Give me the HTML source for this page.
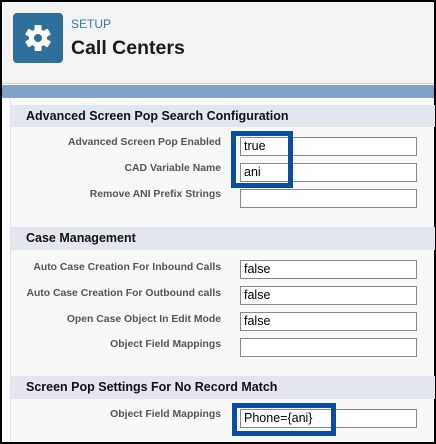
<!DOCTYPE html>
<html><head><style>
*{margin:0;padding:0;box-sizing:border-box}
body{width:436px;height:444px;background:#000;position:relative;overflow:hidden;font-family:"Liberation Sans",Arial,sans-serif}
.page{position:absolute;left:2px;top:2px;width:432px;height:440px;background:#fff;overflow:hidden}
.hdr{position:absolute;left:0;top:0;width:432px;height:82px;background:#f3f3f3;border-bottom:1px solid #d0d0d0}
.icon{position:absolute;left:11px;top:11px;width:50px;height:50px;background:#2e6f9b;border-radius:4px}
.setup{position:absolute;left:69px;top:15px;font-size:12px;color:#3a79a8}
.title{position:absolute;left:69px;top:35px;font-size:19.5px;font-weight:bold;color:#1a1a1a}
.banner{position:absolute;left:0;top:83px;width:432px;height:13px;background:#7fa2c8}
.content{position:absolute;width:424px;height:343px;background:#f8f8f8;border-left:1px solid #e2e2e2}
.sh{position:absolute;left:0;width:424px;background:#e3e6ee;font-size:12.5px;font-weight:bold;color:#111;padding-left:15px;line-height:22px}
.lbl{position:absolute;right:213px;font-size:10.4px;font-weight:bold;color:#555;white-space:nowrap;text-align:right}
.in{position:absolute;left:229px;width:177px;height:19px;background:#fff;border:1px solid #888;font-size:12.5px;padding-left:3px;line-height:17px;color:#000}
.box{position:absolute;border:5px solid #0a4ea3}
</style></head><body>
<div class="page">
<div class="hdr">
<div class="icon"><svg width="50" height="50" viewBox="0 0 50 50"><g fill="#fff" transform="translate(25,25)">
<circle r="9"/>
<rect x="-3.5" y="-13" width="7" height="6" rx="1"/>
<rect x="-3.5" y="-13" width="7" height="6" rx="1" transform="rotate(60)"/>
<rect x="-3.5" y="-13" width="7" height="6" rx="1" transform="rotate(120)"/>
<rect x="-3.5" y="-13" width="7" height="6" rx="1" transform="rotate(180)"/>
<rect x="-3.5" y="-13" width="7" height="6" rx="1" transform="rotate(240)"/>
<rect x="-3.5" y="-13" width="7" height="6" rx="1" transform="rotate(300)"/>
</g><circle cx="25" cy="25" r="4" fill="#2e6f9b"/></svg></div>
<div class="setup">SETUP</div>
<div class="title">Call Centers</div>
</div>
<div class="banner"></div>
</div>
<div class="content" style="left:10px;top:99px">
<div class="sh" style="top:6px">Advanced Screen Pop Search Configuration</div>
<div class="lbl" style="top:38px">Advanced Screen Pop Enabled</div>
<div class="in" style="top:38px">true</div>
<div class="lbl" style="top:64px">CAD Variable Name</div>
<div class="in" style="top:64px">ani</div>
<div class="lbl" style="top:90px">Remove ANI Prefix Strings</div>
<div class="in" style="top:90px"></div>
<div class="sh" style="top:128px;height:23px">Case Management</div>
<div class="lbl" style="top:163px">Auto Case Creation For Inbound Calls</div>
<div class="in" style="top:161px">false</div>
<div class="lbl" style="top:189px">Auto Case Creation For Outbound calls</div>
<div class="in" style="top:187px">false</div>
<div class="lbl" style="top:215px">Open Case Object In Edit Mode</div>
<div class="in" style="top:213px">false</div>
<div class="lbl" style="top:240px">Object Field Mappings</div>
<div class="in" style="top:239px"></div>
<div class="sh" style="top:277px;height:23px">Screen Pop Settings For No Record Match</div>
<div class="lbl" style="top:310px">Object Field Mappings</div>
<div class="in" style="top:310px">Phone={ani}</div>
</div>
<div class="box" style="left:231px;top:131px;width:62px;height:57px"></div>
<div class="box" style="left:232px;top:403px;width:104px;height:33px"></div>
</body></html>
